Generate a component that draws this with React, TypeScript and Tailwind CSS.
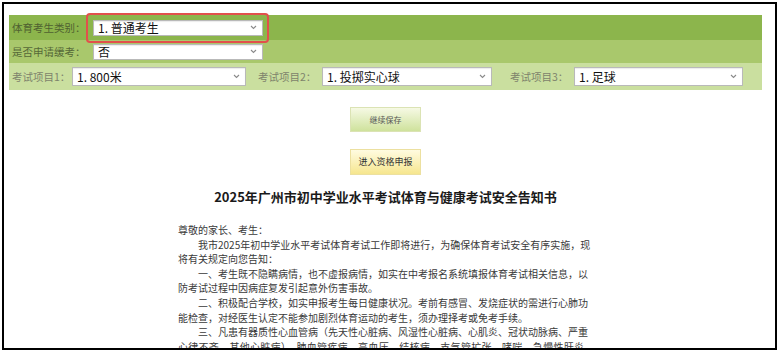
import React from "react";

const font = { fontFamily: '"Noto Sans CJK SC", "Noto Sans", sans-serif' };

function Chevron() {
  return (
    <svg width="7" height="5" viewBox="0 0 7 5" className="shrink-0">
      <path d="M1 1 L3.5 3.5 L6 1" fill="none" stroke="#8a8a8a" strokeWidth="1.1" />
    </svg>
  );
}

function Sel({ text, w, h }: { text: string; w: string; h: string }) {
  return (
    <div className={`${w} ${h} bg-white border border-[#b9b9b9] flex items-center justify-between pl-[4px] pr-[5px] shadow-[inset_0_1px_1px_rgba(0,0,0,0.08)]`}>
      <span className="text-[12px] leading-none text-[#111]">{text}</span>
      <Chevron />
    </div>
  );
}

const lines: { t: string; indent?: boolean; full?: boolean }[] = [
  { t: "尊敬的家长、考生：" },
  { t: "我市2025年初中学业水平考试体育考试工作即将进行，为确保体育考试安全有序实施，现", indent: true, full: true },
  { t: "将有关规定向您告知：" },
  { t: "一、考生既不隐瞒病情，也不虚报病情，如实在中考报名系统填报体育考试相关信息，以", indent: true, full: true },
  { t: "防考试过程中因病症复发引起意外伤害事故。" },
  { t: "二、积极配合学校，如实申报考生每日健康状况。考前有感冒、发烧症状的需进行心肺功", indent: true, full: true },
  { t: "能检查，对经医生认定不能参加剧烈体育运动的考生，须办理择考或免考手续。" },
  { t: "三、凡患有器质性心血管病（先天性心脏病、风湿性心脏病、心肌炎、冠状动脉病、严重", indent: true, full: true },
  { t: "心律不齐、其他心脏病）、肺血管疾病、高血压、结核病、支气管扩张、哮喘、急慢性肝炎", full: true },
];

export default function App() {
  return (
    <div className="w-[780px] h-[354px] bg-white pl-[2px] pt-[2px]" style={font}>
      <div className="w-[775px] h-[348px] border-2 border-black overflow-hidden pl-[5px] pt-[11px]">
        <div className="w-[753px]">
          {/* row 1 */}
          <div className="h-[25px] bg-[#8cb54c] flex items-center pl-[3px]">
            <span className="w-[81px] text-[10.5px] text-[#4f6130]">体育考生类别：</span>
            <div className="relative">
              <Sel text="1. 普通考生" w="w-[170px]" h="h-[16px]" />
              <span className="absolute -left-[7px] -right-[6px] -top-[7px] -bottom-[7px] border-2 border-[#e2504c] rounded-[4px]" />
            </div>
          </div>
          {/* row 2 */}
          <div className="h-[23px] bg-[#a9c86c] flex items-center pl-[3px]">
            <span className="w-[81px] text-[10.5px] text-[#566838]">是否申请缓考：</span>
            <Sel text="否" w="w-[170px]" h="h-[16px]" />
          </div>
          {/* row 3 */}
          <div className="h-[27px] bg-[#cadf9f] flex items-center pl-[3px]">
            <span className="w-[60px] text-[10.5px] text-[#7e836c]">考试项目1：</span>
            <Sel text="1. 800米" w="w-[174px]" h="h-[19px]" />
            <span className="w-[64px] ml-[12px] text-[10.5px] text-[#7e836c]">考试项目2：</span>
            <Sel text="1. 投掷实心球" w="w-[170px]" h="h-[19px]" />
            <span className="w-[64px] ml-[18px] text-[10.5px] text-[#7e836c]">考试项目3：</span>
            <Sel text="1. 足球" w="w-[169px]" h="h-[19px]" />
          </div>

          <div className="flex flex-col items-center">
            <div className="mt-[17px] w-[71px] h-[25px] border border-[#dbe3b4] bg-gradient-to-b from-[#f6f9e4] to-[#cfe29c] flex items-center justify-center">
              <span className="text-[8px] text-[#555]">继续保存</span>
            </div>
            <div className="mt-[17px] w-[71px] h-[26px] border border-[#ece0a0] bg-gradient-to-b from-[#fffbe0] to-[#f6e68e] flex items-center justify-center">
              <span className="text-[9px] text-[#333]">进入资格申报</span>
            </div>
            <div className="mt-[13px] h-[18px] leading-[18px] text-[13px] font-bold text-[#1a1a1a]">
              2025年广州市初中学业水平考试体育与健康考试安全告知书
            </div>
          </div>

          <div className="ml-[169px] w-[406px] mt-[17px] text-[10px] leading-[14.6px] text-[#3a3a3a]">
            {lines.map((l, i) => (
              <div
                key={i}
                className={`whitespace-nowrap ${l.indent ? "pl-[20px]" : ""} ${l.full ? "text-justify [text-align-last:justify] whitespace-normal" : ""}`}
              >
                {l.t}
              </div>
            ))}
          </div>
        </div>
      </div>
    </div>
  );
}
